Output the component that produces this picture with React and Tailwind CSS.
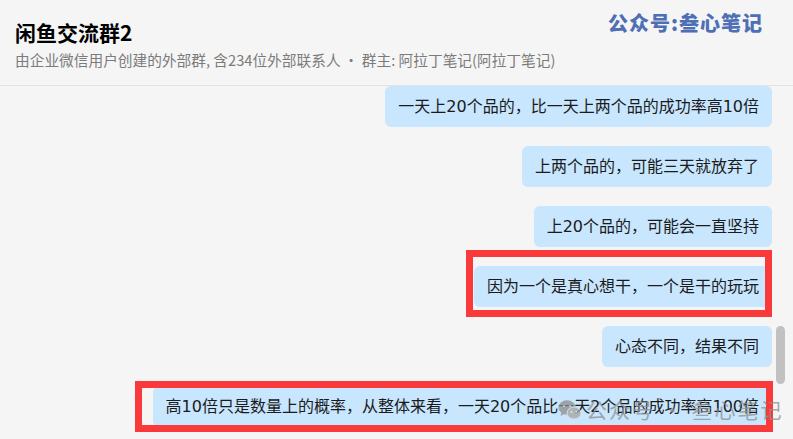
import React from "react";

const msgs = [
  "一天上20个品的，比一天上两个品的成功率高10倍",
  "上两个品的，可能三天就放弃了",
  "上20个品的，可能会一直坚持",
  "因为一个是真心想干，一个是干的玩玩",
  "心态不同，结果不同",
  "高10倍只是数量上的概率，从整体来看，一天20个品比一天2个品的成功率高100倍",
];

const cjk = {
  fontFamily: '"Noto Sans CJK SC", "Noto Sans", sans-serif',
};

const bubbleFont = {
  fontFamily: '"DejaVu Sans", "Noto Sans CJK SC", sans-serif',
};

const WeChatMark = () => (
  <svg width="24" height="22" viewBox="0 0 24 22">
    <ellipse cx="9" cy="8.5" rx="8.5" ry="7.2" fill="#8c8c8c" />
    <path d="M3.5 13.5 L2.5 17 L6.8 14.8 Z" fill="#8c8c8c" />
    <ellipse cx="16" cy="14" rx="7" ry="6" fill="#a5a5a5" stroke="#dcdcdc" strokeWidth="1" />
    <circle cx="6" cy="7" r="1.1" fill="#e8e8e8" />
    <circle cx="12" cy="7" r="1.1" fill="#e8e8e8" />
    <circle cx="13.6" cy="13" r="0.9" fill="#e8e8e8" />
    <circle cx="18.4" cy="13" r="0.9" fill="#e8e8e8" />
  </svg>
);

const App = () => {
  return (
    <div
      className="relative w-[793px] h-[439px] overflow-hidden bg-[#f5f5f5] text-[#1b1b1b]"
      style={cjk}
    >
      <div className="h-[86px] border-b border-[#e2e2e2] px-[15px] pt-[19px]">
        <h1 className="text-[21px] leading-[27px] font-bold text-black">
          闲鱼交流群2
        </h1>
        <p className="mt-[4px] text-[14.7px] leading-[20px] text-[#7b7b7b]">
          由企业微信用户创建的外部群, 含234位外部联系人 · 群主: 阿拉丁笔记(阿拉丁笔记)
        </p>
      </div>

      <div className="absolute right-[30px] top-[8px] text-[20px] font-black tracking-[1px] text-[#4e6fb6]">
        公众号:叁心笔记
      </div>

      <div className="flex flex-col items-end gap-[19px] pr-[21px]">
        {msgs.map((m, i) => (
          <div
            key={i}
            className="h-[41px] flex items-center rounded-[6px] bg-[#c8e6fe] px-[13px] text-[16px] whitespace-nowrap"
            style={bubbleFont}
          >
            {m}
          </div>
        ))}
      </div>

      <div className="absolute left-[466px] top-[250px] w-[306px] h-[67px] border-[7px] border-[#fa3a3a]" />
      <div className="absolute left-[135px] top-[381px] w-[638px] h-[51px] border-[7px] border-[#fa3a3a]" />

      <div className="absolute left-[776px] top-[326px] w-[9px] h-[58px] rounded-full bg-[#c1c1c1]" />

      <div className="absolute left-[558px] top-[394px] flex items-center gap-[4px] opacity-75">
        <WeChatMark />
        <span className="text-[21px] text-[#8f8f8f] tracking-[2px]">公众号 · 叁心笔记</span>
      </div>
    </div>
  );
};

export default App;
